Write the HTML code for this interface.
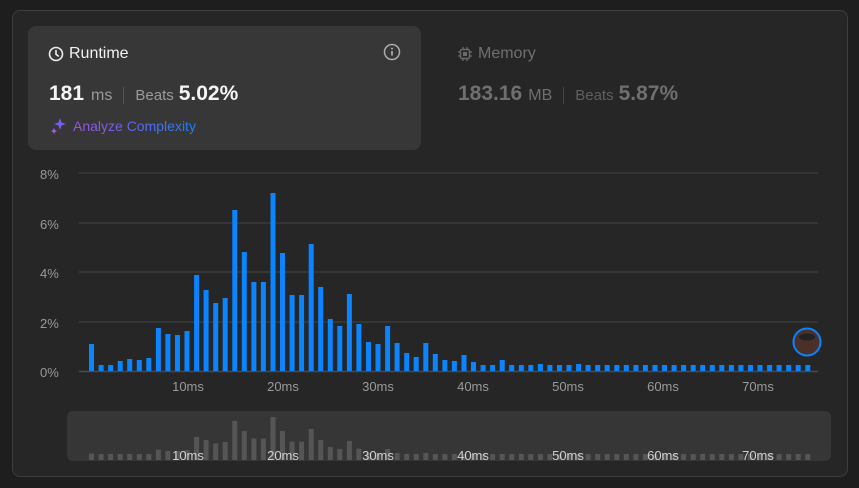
<!DOCTYPE html>
<html><head><meta charset="utf-8"><style>
body{margin:0;width:859px;height:488px;background:#1e1e1e;font-family:"Liberation Sans",sans-serif;overflow:hidden;position:relative}
.card{position:absolute;left:12px;top:10px;width:834px;height:465px;border:1px solid #3d3d3d;border-radius:8px;background:#262626}
.rt{position:absolute;left:28px;top:26px;width:393px;height:124px;background:#373737;border-radius:8px}
.t{position:absolute;white-space:nowrap}
.row{position:absolute;display:flex;align-items:baseline;white-space:nowrap;height:26px}
.big{font-size:21px;font-weight:bold}
.sep{display:inline-block;width:1px;height:17px;margin:0 11px;align-self:center}
</style></head><body>
<div class="card"></div>
<div class="rt"></div>
<svg class="t" style="left:48px;top:46px" width="16" height="16" viewBox="0 0 16 16"><circle cx="8" cy="8" r="6.5" fill="none" stroke="#eee" stroke-width="1.6"/><path d="M8 4.5V8.3L10.3 10" fill="none" stroke="#eee" stroke-width="1.6" stroke-linecap="round"/></svg>
<div class="t" style="left:69px;top:45px;font-size:16px;color:#f2f2f2">Runtime</div>
<svg class="t" style="left:383px;top:43px" width="18" height="18" viewBox="0 0 18 18"><circle cx="9" cy="9" r="7.5" fill="none" stroke="#aaa" stroke-width="1.5"/><circle cx="9" cy="5.6" r="1" fill="#aaa"/><path d="M9 8v4.5" stroke="#aaa" stroke-width="1.8"/></svg>
<div class="row" style="left:49px;top:82px"><span class="big" style="color:#f5f5f5">181</span><span style="font-size:16px;color:#9a9a9a;margin-left:7px">ms</span><span class="sep" style="background:#555"></span><span style="font-size:15px;color:#9a9a9a;margin-right:5px">Beats</span><span class="big" style="color:#f5f5f5">5.02%</span></div>
<svg class="t" style="left:49px;top:117px" width="18" height="18" viewBox="0 0 18 18"><path d="M11 1L12.5 5.5 17 7 12.5 8.5 11 13 9.5 8.5 5 7 9.5 5.5Z" fill="#7a5af8"/><path d="M5 11L6 13 8 14 6 15 5 17 4 15 2 14 4 13Z" fill="#a855f7"/></svg>
<div class="t" style="left:73px;top:118px;font-size:14px;background:linear-gradient(90deg,#a050e0,#1a7fff);-webkit-background-clip:text;color:transparent">Analyze Complexity</div>
<svg class="t" style="left:457px;top:46px" width="16" height="16" viewBox="0 0 16 16"><rect x="3.5" y="3.5" width="9" height="9" rx="1.5" fill="none" stroke="#6a6a6a" stroke-width="1.4"/><rect x="6" y="6" width="4" height="4" fill="#6a6a6a"/><path d="M6 1v2M10 1v2M6 13v2M10 13v2M1 6h2M1 10h2M13 6h2M13 10h2" stroke="#6a6a6a" stroke-width="1.3"/></svg>
<div class="t" style="left:478px;top:45px;font-size:16px;color:#6f6f6f">Memory</div>
<div class="row" style="left:458px;top:82px"><span class="big" style="color:#6f6f6f">183.16</span><span style="font-size:16px;color:#6f6f6f;margin-left:6px">MB</span><span class="sep" style="background:#444"></span><span style="font-size:15px;color:#5f5f5f;margin-right:5px">Beats</span><span class="big" style="color:#6f6f6f">5.87%</span></div>
<svg class="t" style="left:0;top:0" width="859" height="488">
<g stroke="#3a3a3a" stroke-width="1.5"><path d="M79 173H818M79 223H818M79 272H818M79 322H818"/></g>
<path d="M79 371.5H818" stroke="#4a4a4a" stroke-width="1.5"/>
<g font-size="13" fill="#9a9a9a" font-family="Liberation Sans"><text x="40" y="179">8%</text><text x="40" y="229">6%</text><text x="40" y="278">4%</text><text x="40" y="328">2%</text><text x="40" y="377">0%</text>
<g text-anchor="middle"><text x="188" y="391">10ms</text><text x="283" y="391">20ms</text><text x="378" y="391">30ms</text><text x="473" y="391">40ms</text><text x="568" y="391">50ms</text><text x="663" y="391">60ms</text><text x="758" y="391">70ms</text></g></g>
<g stroke="#0a84ff" stroke-width="5">
<path d="M91.5 371V344M101.1 371V365M110.6 371V365M120.2 371V361M129.7 371V359M139.3 371V360M148.8 371V358M158.4 371V328M167.9 371V334M177.5 371V335M187 371V331M196.6 371V275M206.1 371V290M215.7 371V303M225.2 371V298M234.8 371V210M244.3 371V252M253.9 371V282M263.4 371V282M273 371V193M282.5 371V253M292.1 371V295M301.6 371V295M311.2 371V244M320.7 371V287M330.3 371V319M339.8 371V326M349.4 371V294M358.9 371V324M368.5 371V342M378 371V344M387.6 371V326M397.1 371V343M406.7 371V353M416.2 371V357M425.8 371V343M435.3 371V354M444.9 371V360M454.4 371V361M464 371V355M473.5 371V362M483.1 371V365M492.6 371V365M502.2 371V360M511.7 371V365M521.3 371V365M530.8 371V365M540.4 371V364M549.9 371V365M559.5 371V365M569 371V365M578.6 371V364M588.1 371V365M597.7 371V365M607.2 371V365M616.8 371V365M626.3 371V365M635.9 371V365M645.4 371V365M655 371V365M664.5 371V365M674.1 371V365M683.6 371V365M693.2 371V365M702.7 371V365M712.3 371V365M721.8 371V365M731.4 371V365M740.9 371V365M750.5 371V365M760 371V365M769.6 371V365M779.1 371V365M788.7 371V365M798.2 371V365M807.8 371V365"/></g>
<circle cx="807" cy="342" r="13.5" fill="#4a3028" stroke="#0a84ff" stroke-width="2"/>
<ellipse cx="807" cy="337" rx="8" ry="3.5" fill="#222"/>
<rect x="67" y="411" width="764" height="50" rx="6" fill="#363636"/>
<g stroke="#555" stroke-width="5">
<path d="M91.5 460V453.5M101.1 460V454M110.6 460V454M120.2 460V454M129.7 460V454M139.3 460V454M148.8 460V454M158.4 460V449.6M167.9 460V451M177.5 460V451M187 460V450M196.6 460V437M206.1 460V440M215.7 460V443.5M225.2 460V442M234.8 460V421M244.3 460V431M253.9 460V438.5M263.4 460V438.5M273 460V417M282.5 460V431M292.1 460V441.6M301.6 460V441.6M311.2 460V429M320.7 460V440M330.3 460V447M339.8 460V449M349.4 460V441M358.9 460V448.6M368.5 460V453M378 460V453.5M387.6 460V449M397.1 460V453M406.7 460V454M416.2 460V454M425.8 460V453M435.3 460V454M444.9 460V454M454.4 460V454M464 460V454M473.5 460V454M483.1 460V454M492.6 460V454M502.2 460V454M511.7 460V454M521.3 460V454M530.8 460V454M540.4 460V454M549.9 460V454M559.5 460V454M569 460V454M578.6 460V454M588.1 460V454M597.7 460V454M607.2 460V454M616.8 460V454M626.3 460V454M635.9 460V454M645.4 460V454M655 460V454M664.5 460V454M674.1 460V454M683.6 460V454M693.2 460V454M702.7 460V454M712.3 460V454M721.8 460V454M731.4 460V454M740.9 460V454M750.5 460V454M760 460V454M769.6 460V454M779.1 460V454M788.7 460V454M798.2 460V454M807.8 460V454"/></g>
<g font-size="13" fill="#d0d0d0" font-family="Liberation Sans" text-anchor="middle"><text x="188" y="460">10ms</text><text x="283" y="460">20ms</text><text x="378" y="460">30ms</text><text x="473" y="460">40ms</text><text x="568" y="460">50ms</text><text x="663" y="460">60ms</text><text x="758" y="460">70ms</text></g>
</svg>
</body></html>
